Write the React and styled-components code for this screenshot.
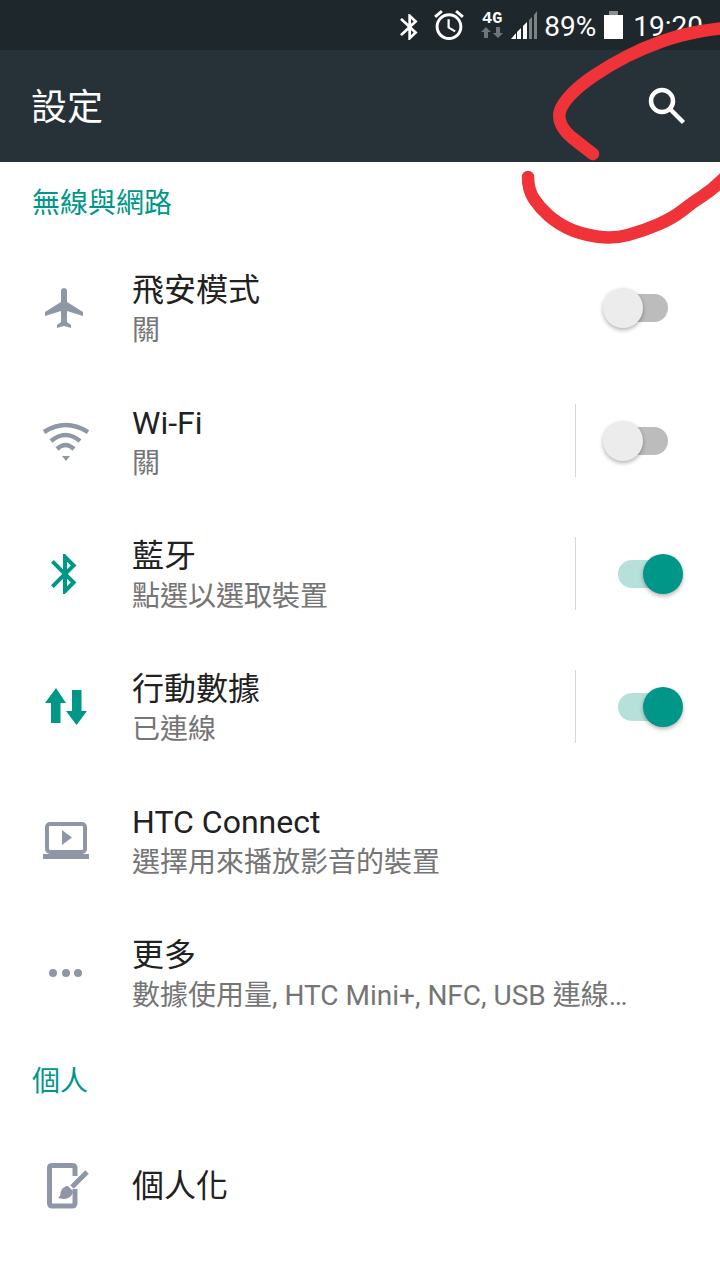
import React from "react";
import styled, { createGlobalStyle } from "styled-components";

const teal = "#009688";
const gray = "#8f97a6";

const GlobalStyle = createGlobalStyle`
  html, body {
    margin: 0;
    padding: 0;
    background: #fff;
  }
  body {
    font-family: Roboto, "Noto Sans CJK TC", sans-serif;
  }
`;

const Page = styled.div`
  position: relative;
  width: 720px;
  height: 1280px;
  overflow: hidden;
  background: #fff;
`;

const StatusBar = styled.div`
  height: 50px;
  background: #1e272b;
  display: flex;
  justify-content: flex-end;
  align-items: center;
  padding-right: 17px;
  color: #fff;
  font-size: 28px;
`;

const StatusItem = styled.div`
  margin-left: ${(p) => p.$gap}px;
  padding-top: ${(p) => p.$drop || 0}px;
  display: flex;
  align-items: center;
  line-height: 46px;
  svg {
    display: block;
  }
`;

const NetBadge = styled.div`
  width: 22px;
  display: flex;
  flex-direction: column;
  align-items: center;
  gap: 2px;
`;

const NetLabel = styled.span`
  font-family: "Liberation Mono", monospace;
  font-size: 17px;
  font-weight: 700;
  line-height: 13px;
  letter-spacing: 0;
`;

const AppBar = styled.div`
  height: 112px;
  background: #263238;
  display: flex;
  align-items: center;
  justify-content: space-between;
  padding: 0 34px 0 31px;
  color: #fff;
`;

const AppTitle = styled.h1`
  margin: -4px 0 0;
  font-family: "Noto Sans CJK TC", sans-serif;
  font-size: 36px;
  font-weight: 400;
  line-height: 1;
`;

const SectionHeader = styled.div`
  height: ${(p) => p.$height}px;
  box-sizing: border-box;
  padding: ${(p) => p.$top}px 0 0 32px;
  font-family: "Noto Sans CJK TC", sans-serif;
  font-size: 28px;
  line-height: 40px;
  color: ${teal};
`;

const Row = styled.div`
  height: 133px;
  display: flex;
  align-items: center;
  padding-left: 41px;
  padding-right: 52px;
`;

const IconBox = styled.div`
  width: 48px;
  height: 48px;
  margin-right: 43px;
  flex: none;
  color: ${(p) => (p.$active ? teal : gray)};
  svg {
    display: block;
  }
`;

const RowText = styled.div`
  flex: 1;
  min-width: 0;
  display: flex;
  flex-direction: column;
  gap: 2px;
  padding-top: ${(p) => (p.$single ? 0 : 4)}px;
`;

const RowTitle = styled.div`
  font-size: 32px;
  line-height: 40px;
  color: #212121;
`;

const RowSub = styled.div`
  font-size: 28px;
  line-height: 38px;
  color: #757575;
  white-space: nowrap;
`;

const Divider = styled.div`
  width: 1px;
  height: 73px;
  background: #d6d6d6;
  margin-right: 42px;
`;

const SwitchTrack = styled.div`
  position: relative;
  width: 50px;
  height: 28px;
  border-radius: 14px;
  flex: none;
  background: ${(p) => (p.$on ? "#b6e0da" : "#bcbcbc")};
`;

const SwitchThumb = styled.div`
  position: absolute;
  top: -6px;
  ${(p) => (p.$on ? "right: -15px;" : "left: -15px;")}
  width: 40px;
  height: 40px;
  border-radius: 50%;
  background: ${(p) => (p.$on ? teal : "#ececec")};
  box-shadow: 0 2px 4px rgba(0, 0, 0, 0.3);
`;

const Scribble = styled.svg`
  position: absolute;
  top: 0;
  left: 0;
  pointer-events: none;
`;

const smooth = (pts) => {
  let d = `M${pts[0][0]} ${pts[0][1]}`;
  for (let i = 1; i < pts.length - 1; i++) {
    const mx = (pts[i][0] + pts[i + 1][0]) / 2;
    const my = (pts[i][1] + pts[i + 1][1]) / 2;
    d += ` Q${pts[i][0]} ${pts[i][1]} ${mx} ${my}`;
  }
  const last = pts[pts.length - 1];
  return `${d} L${last[0]} ${last[1]}`;
};

const strokeTop = smooth([
  [735, 27], [713, 29], [680, 35], [643, 48], [610, 65], [580, 85], [562, 104],
  [558, 118], [565, 132], [580, 144], [593, 154],
]);

const strokeBottom = smooth([
  [528, 177], [528, 190], [540, 208], [557, 223], [580, 234], [613, 239],
  [643, 231], [673, 218], [693, 202], [712, 190], [730, 172],
]);

const BluetoothPath =
  "M17.71 7.71L12 2h-1v7.59L6.41 5 5 6.41 10.59 12 5 17.59 6.41 19 11 14.41V22h1l5.71-5.71-4.3-4.29 4.3-4.29zM13 5.83l1.88 1.88L13 9.59V5.83zm1.88 10.46L13 18.17v-3.76l1.88 1.88z";

const Plane = () => (
  <svg width="48" height="48" viewBox="0 0 24 24" fill="currentColor">
    <path d="M21 16v-2l-8-5V3.5c0-.83-.67-1.5-1.5-1.5S10 2.67 10 3.5V9l-8 5v2l8-2.5V19l-2 1.5V22l3.5-1 3.5 1v-1.5L13 19v-5.5l8 2.5z" />
  </svg>
);

const Wifi = () => (
  <svg width="48" height="48" viewBox="0 0 48 48" fill="none" stroke="currentColor" strokeWidth="4.5">
    <path d="M3 15 Q24.5 1 47 15" />
    <path d="M10 24 Q24.5 12 39 24" />
    <path d="M16 32 Q24.5 24 33 32" />
    <polygon points="21,39 29,39 25,44" fill="currentColor" stroke="none" />
  </svg>
);

const Bluetooth = () => (
  <svg width="48" height="48" viewBox="0 0 24 24" fill="currentColor">
    <path d={BluetoothPath} />
  </svg>
);

const DataArrows = () => (
  <svg width="48" height="48" viewBox="0 0 48 48" fill="currentColor">
    <polygon points="15,5 25,20 19.5,20 19.5,40 10,40 10,20 4,20" />
    <polygon points="31,7 40.5,7 40.5,28 46,28 35.5,42 25,28 31,28" />
  </svg>
);

const LaptopPlay = () => (
  <svg width="48" height="48" viewBox="0 0 48 48" fill="currentColor">
    <rect x="6" y="8" width="38" height="28" rx="3" fill="none" stroke="currentColor" strokeWidth="4" />
    <rect x="2" y="38" width="46" height="5" />
    <polygon points="21,14 21,29 31,21.5" />
  </svg>
);

const Dots = () => (
  <svg width="48" height="48" viewBox="0 0 48 48" fill="currentColor">
    <circle cx="12" cy="24" r="4" />
    <circle cx="25" cy="24" r="4" />
    <circle cx="37" cy="24" r="4" />
  </svg>
);

const Personalize = () => (
  <svg width="48" height="48" viewBox="0 0 48 48" fill="none" stroke="currentColor" strokeWidth="5">
    <path d="M34 14 V6 Q34 3.5 31 3.5 H11 Q8.5 3.5 8.5 6 V41 Q8.5 44 11 44 H31 Q34 44 34 41 V27" />
    <path d="M46 10 L31 25" />
    <path
      d="M27 24 l5 5 c0 5 -5 8 -9 8 c-2 0 -5 -1 -6 -1 c3 -2 2 -4 3 -7 c1 -3 4 -5 7 -5z"
      fill="currentColor"
      stroke="none"
    />
  </svg>
);

const rows1 = [
  { icon: <Plane />, title: "飛安模式", sub: "關", toggle: "off" },
  { icon: <Wifi />, title: "Wi-Fi", sub: "關", toggle: "off", divider: true },
  { icon: <Bluetooth />, active: true, title: "藍牙", sub: "點選以選取裝置", toggle: "on", divider: true },
  { icon: <DataArrows />, active: true, title: "行動數據", sub: "已連線", toggle: "on", divider: true },
  { icon: <LaptopPlay />, title: "HTC Connect", sub: "選擇用來播放影音的裝置" },
  { icon: <Dots />, title: "更多", sub: "數據使用量, HTC Mini+, NFC, USB 連線…" },
];

function SettingRow({ icon, active, title, sub, toggle, divider }) {
  return (
    <Row>
      <IconBox $active={active}>{icon}</IconBox>
      <RowText $single={!sub}>
        <RowTitle>{title}</RowTitle>
        {sub && <RowSub>{sub}</RowSub>}
      </RowText>
      {divider && <Divider />}
      {toggle && (
        <SwitchTrack $on={toggle === "on"}>
          <SwitchThumb $on={toggle === "on"} />
        </SwitchTrack>
      )}
    </Row>
  );
}

export default function App() {
  return (
    <Page>
      <GlobalStyle />
      <StatusBar>
        <StatusItem $gap={0} $drop={4}>
          <svg width="18" height="26" viewBox="5 2 13 20" fill="#fff" preserveAspectRatio="none">
            <path d={BluetoothPath} />
          </svg>
        </StatusItem>
        <StatusItem $gap={16}>
          <svg width="30" height="30" viewBox="2 1.8 20 20.2" fill="#fff">
            <path d="M22 5.72l-4.6-3.86-1.29 1.53 4.6 3.86L22 5.72zM7.88 3.39L6.6 1.86 2 5.71l1.29 1.53 4.59-3.85zM12.5 8H11v6l4.75 2.85.75-1.23-4-2.37V8zM12 4c-4.97 0-9 4.03-9 9s4.03 9 9 9 9-4.03 9-9-4.03-9-9-9zm0 16c-3.87 0-7-3.13-7-7s3.13-7 7-7 7 3.13 7 7-3.13 7-7 7z" />
          </svg>
        </StatusItem>
        <StatusItem $gap={17}>
          <NetBadge>
            <NetLabel>4G</NetLabel>
            <svg width="22" height="11" viewBox="0 0 22 11" fill="#6f7679">
              <polygon points="5,0 10,5 7,5 7,11 3,11 3,5 0,5" />
              <polygon points="15,0 19,0 19,6 22,6 17,11 12,6 15,6" />
            </svg>
          </NetBadge>
        </StatusItem>
        <StatusItem $gap={8}>
          <svg width="26" height="28" viewBox="0 0 26 28">
            <polygon points="0,28 5,22 5,28" fill="#fff" />
            <polygon points="6,21 10,17 10,28 6,28" fill="#fff" />
            <polygon points="12,15 16,11 16,28 12,28" fill="#fff" />
            <polygon points="18,9 21,6 21,28 18,28" fill="#7d8385" />
            <polygon points="23,4 26,0 26,28 23,28" fill="#7d8385" />
          </svg>
        </StatusItem>
        <StatusItem $gap={7} $drop={4}>89%</StatusItem>
        <StatusItem $gap={8}>
          <svg width="19" height="28" viewBox="0 0 19 28">
            <rect x="5" y="0" width="9" height="4" fill="#8a8f91" />
            <rect x="0" y="4" width="19" height="24" fill="#fff" />
          </svg>
        </StatusItem>
        <StatusItem $gap={10} $drop={4}>19:20</StatusItem>
      </StatusBar>
      <AppBar>
        <AppTitle>設定</AppTitle>
        <svg width="38" height="38" viewBox="0 0 38 38" fill="none" stroke="#fff" strokeWidth="4.5">
          <circle cx="14" cy="14" r="11" />
          <path d="M22 22 L35.5 35.5" />
        </svg>
      </AppBar>
      <SectionHeader $height={79} $top={19}>無線與網路</SectionHeader>
      {rows1.map((r) => (
        <SettingRow key={r.title} {...r} />
      ))}
      <SectionHeader $height={80} $top={20}>個人</SectionHeader>
      <SettingRow icon={<Personalize />} title="個人化" />
      <Scribble width="720" height="1280" viewBox="0 0 720 1280" fill="none" stroke="#ef3338" strokeWidth="12.5" strokeLinecap="round" strokeLinejoin="round">
        <path d={strokeTop} />
        <path d={strokeBottom} />
      </Scribble>
    </Page>
  );
}
